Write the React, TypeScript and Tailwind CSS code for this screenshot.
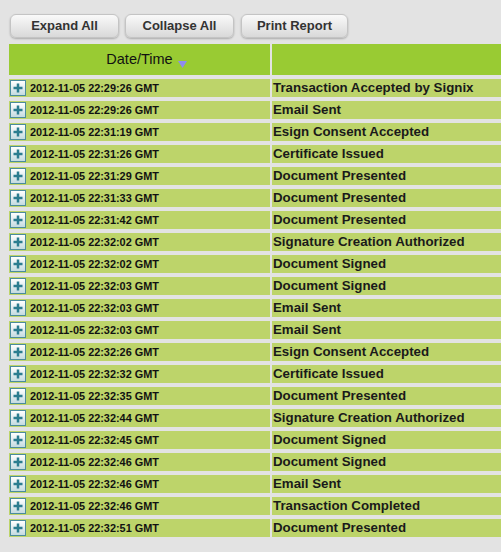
import React from 'react';

const rows: [string, string][] = [
  ['2012-11-05 22:29:26 GMT', 'Transaction Accepted by Signix'],
  ['2012-11-05 22:29:26 GMT', 'Email Sent'],
  ['2012-11-05 22:31:19 GMT', 'Esign Consent Accepted'],
  ['2012-11-05 22:31:26 GMT', 'Certificate Issued'],
  ['2012-11-05 22:31:29 GMT', 'Document Presented'],
  ['2012-11-05 22:31:33 GMT', 'Document Presented'],
  ['2012-11-05 22:31:42 GMT', 'Document Presented'],
  ['2012-11-05 22:32:02 GMT', 'Signature Creation Authorized'],
  ['2012-11-05 22:32:02 GMT', 'Document Signed'],
  ['2012-11-05 22:32:03 GMT', 'Document Signed'],
  ['2012-11-05 22:32:03 GMT', 'Email Sent'],
  ['2012-11-05 22:32:03 GMT', 'Email Sent'],
  ['2012-11-05 22:32:26 GMT', 'Esign Consent Accepted'],
  ['2012-11-05 22:32:32 GMT', 'Certificate Issued'],
  ['2012-11-05 22:32:35 GMT', 'Document Presented'],
  ['2012-11-05 22:32:44 GMT', 'Signature Creation Authorized'],
  ['2012-11-05 22:32:45 GMT', 'Document Signed'],
  ['2012-11-05 22:32:46 GMT', 'Document Signed'],
  ['2012-11-05 22:32:46 GMT', 'Email Sent'],
  ['2012-11-05 22:32:46 GMT', 'Transaction Completed'],
  ['2012-11-05 22:32:51 GMT', 'Document Presented'],
];

const Btn = ({ label, w }: { label: string; w: string }) => (
  <button
    className={`${w} h-[24px] rounded-[6px] border border-[#c4c4c4] bg-gradient-to-b from-[#fafafa] to-[#d9d9d9] shadow-[0_1px_2px_rgba(0,0,0,0.25)] text-[13px] font-bold text-[#333]`}
  >
    {label}
  </button>
);

// expand toggle, the little boxed plus
const PlusIcon = () => (
  <span className="flex h-[16px] w-[16px] shrink-0 items-center justify-center border border-[#4b8c9c] bg-gradient-to-b from-[#ffffff] to-[#c5dbe0]">
    <svg width="10" height="10" viewBox="0 0 10 10">
      <path d="M3.75 0.5h2.5v3.25h3.25v2.5H6.25v3.25h-2.5V6.25H0.5v-2.5h3.25z" fill="#2b7d8f" />
    </svg>
  </span>
);

export default function App() {
  return (
    <div className="min-h-[552px] bg-[#e3e3e3] font-['Liberation_Sans',Arial,sans-serif]">
      <div className="flex gap-[5px] pl-[10px] pt-[14px]">
        <Btn label="Expand All" w="w-[109px]" />
        <Btn label="Collapse All" w="w-[109px] ml-[1px]" />
        <Btn label="Print Report" w="w-[107px] ml-[2px]" />
      </div>
      <div className="ml-[9px] mt-[6px] grid grid-cols-[261px_1fr] gap-x-[2px] gap-y-[4px]">
        <div className="flex h-[31px] items-center justify-center bg-[#99cb33] text-[14.5px] text-[#111]">
          <span className="relative">
            Date/Time
            <svg width="9" height="7" viewBox="0 0 9 7" className="absolute left-[calc(100%+5px)] top-[12px]">
              <path d="M0 0h9L4.5 7z" fill="#8f8cf0" />
            </svg>
          </span>
        </div>
        <div className="h-[31px] bg-[#99cb33]" />
        {rows.map(([d, e], i) => (
          <React.Fragment key={i}>
            <div className="flex h-[18px] items-center gap-[4px] bg-[#bdd46a] pl-[1px]">
              <PlusIcon />
              <span className="text-[10.9px] font-bold text-[#111]">{d}</span>
            </div>
            <div className="flex h-[18px] items-center bg-[#bdd46a] pl-[1px]">
              <span className="whitespace-nowrap text-[13.3px] font-bold text-[#1a1a1a]">{e}</span>
            </div>
          </React.Fragment>
        ))}
      </div>
    </div>
  );
}
